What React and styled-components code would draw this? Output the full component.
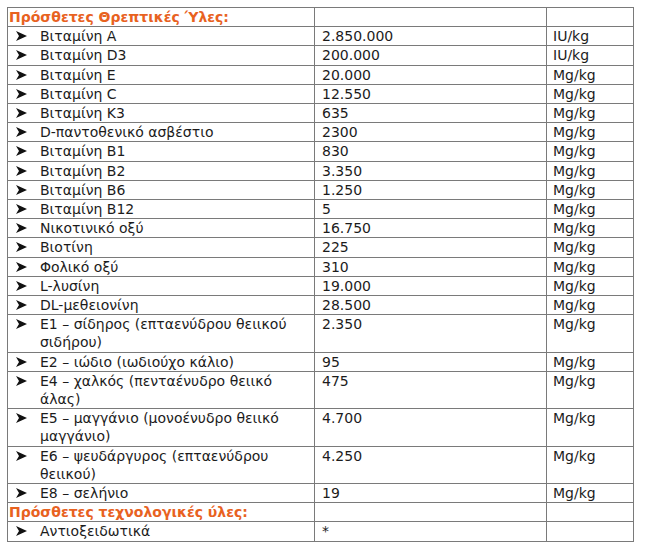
import styled, { createGlobalStyle } from 'styled-components';

const GlobalStyle = createGlobalStyle`
  body {
    margin: 0;
    background: #fff;
    font-family: "DejaVu Sans", "Liberation Sans", sans-serif;
    color: #1c1c1c;
  }
`;

const Sheet = styled.div`
  padding: 7px 0 0 7px;
`;

const Table = styled.table`
  border-collapse: collapse;
  table-layout: fixed;
  width: 626px;
  font-size: 14px;
  line-height: 18.2px;

  td {
    border: 1px solid #7a7a7a;
    padding: 0;
    vertical-align: top;
    white-space: nowrap;
  }
`;

const Col = styled.col`
  width: ${(p) => p.$w}px;
`;

const NameCell = styled.td``;

const ValueCell = styled.td`
  padding-left: 7px !important;
`;

const UnitCell = styled.td`
  padding-left: 6px !important;
`;

const SectionTitle = styled.td`
  color: #e8621f;
  font-weight: bold;
  padding-left: 1px !important;
`;

const Item = styled.div`
  display: flex;
  align-items: flex-start;
  padding-left: 8px;
`;

const Bullet = styled.svg`
  flex: none;
  width: 11px;
  height: 10px;
  margin-top: 4px;
  margin-right: 13px;
`;

const Label = styled.span`
  display: block;
`;

const Arrow = () => (
  <Bullet viewBox="0 0 11 10">
    <path d="M0 0 L11 5 L0 10 L3 5 Z" fill="#111" />
  </Bullet>
);

const nutrients = [
  [['Βιταμίνη A'], '2.850.000', 'IU/kg'],
  [['Βιταμίνη D3'], '200.000', 'IU/kg'],
  [['Βιταμίνη E'], '20.000', 'Mg/kg'],
  [['Βιταμίνη C'], '12.550', 'Mg/kg'],
  [['Βιταμίνη K3'], '635', 'Mg/kg'],
  [['D-παντοθενικό ασβέστιο'], '2300', 'Mg/kg'],
  [['Βιταμίνη B1'], '830', 'Mg/kg'],
  [['Βιταμίνη B2'], '3.350', 'Mg/kg'],
  [['Βιταμίνη B6'], '1.250', 'Mg/kg'],
  [['Βιταμίνη B12'], '5', 'Mg/kg'],
  [['Νικοτινικό οξύ'], '16.750', 'Mg/kg'],
  [['Βιοτίνη'], '225', 'Mg/kg'],
  [['Φολικό οξύ'], '310', 'Mg/kg'],
  [['L-λυσίνη'], '19.000', 'Mg/kg'],
  [['DL-μεθειονίνη'], '28.500', 'Mg/kg'],
  [['E1 – σίδηρος (επταενύδρου θειικού', 'σιδήρου)'], '2.350', 'Mg/kg'],
  [['E2 – ιώδιο (ιωδιούχο κάλιο)'], '95', 'Mg/kg'],
  [['E4 – χαλκός (πενταένυδρο θειικό', 'άλας)'], '475', 'Mg/kg'],
  [['E5 – μαγγάνιο (μονοένυδρο θειικό', 'μαγγάνιο)'], '4.700', 'Mg/kg'],
  [['E6 – ψευδάργυρος (επταενύδρου', 'θειικού)'], '4.250', 'Mg/kg'],
  [['E8 – σελήνιο'], '19', 'Mg/kg'],
];

const additives = [[['Αντιοξειδωτικά'], '*', '']];

const Row = ({ lines, value, unit }) => (
  <tr>
    <NameCell>
      <Item>
        <Arrow />
        <Label>
          {lines.map((l, i) => (
            <span key={i}>
              {i > 0 && <br />}
              {l}
            </span>
          ))}
        </Label>
      </Item>
    </NameCell>
    <ValueCell>{value}</ValueCell>
    <UnitCell>{unit}</UnitCell>
  </tr>
);

const Section = ({ title, rows }) => (
  <>
    <tr>
      <SectionTitle>{title}</SectionTitle>
      <ValueCell />
      <UnitCell />
    </tr>
    {rows.map(([lines, value, unit], i) => (
      <Row key={i} lines={lines} value={value} unit={unit} />
    ))}
  </>
);

export default function App() {
  return (
    <>
      <GlobalStyle />
      <Sheet>
        <Table>
          <colgroup>
            <Col $w={307} />
            <Col $w={232} />
            <Col $w={87} />
          </colgroup>
          <tbody>
            <Section title="Πρόσθετες Θρεπτικές Ύλες:" rows={nutrients} />
            <Section title="Πρόσθετες τεχνολογικές ύλες:" rows={additives} />
          </tbody>
        </Table>
      </Sheet>
    </>
  );
}
